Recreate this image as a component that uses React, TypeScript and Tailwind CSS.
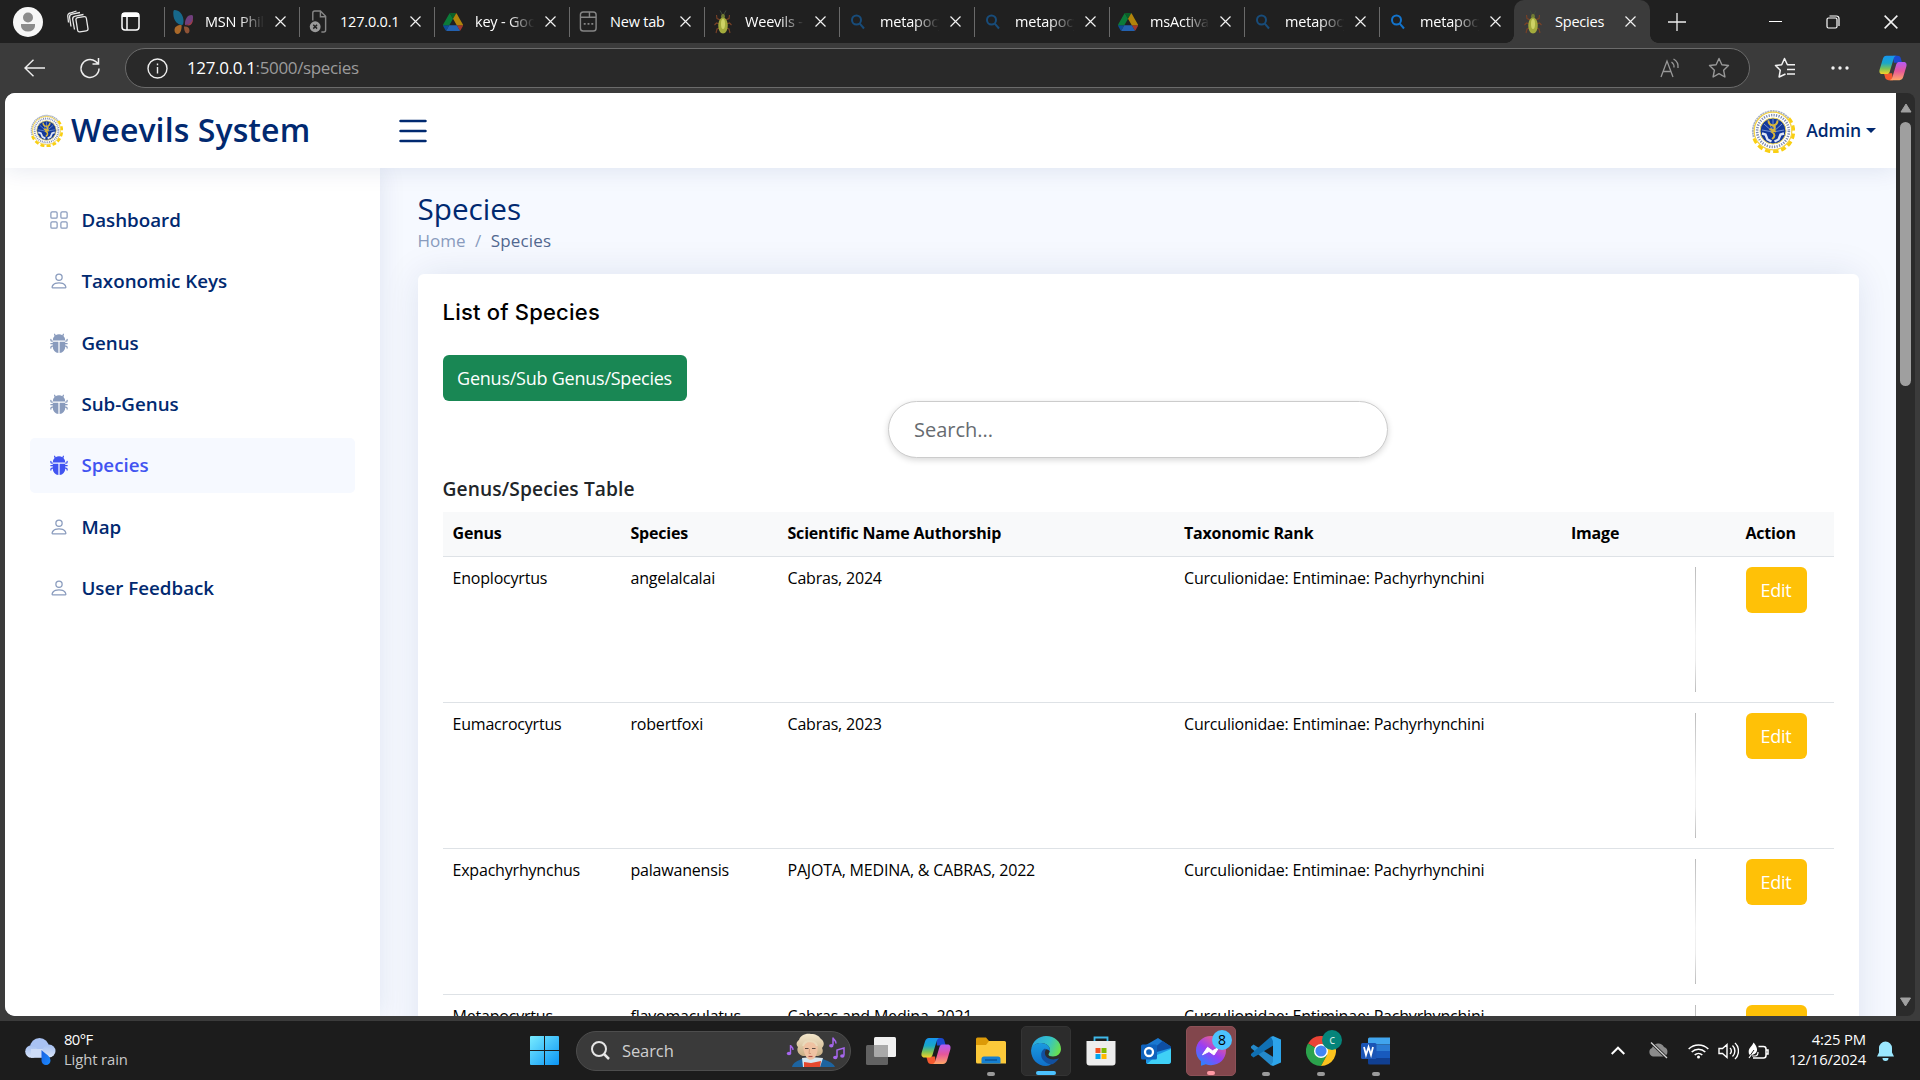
import React from "react";
import { BsGrid, BsPerson, BsBugFill, BsList } from "react-icons/bs";

const DriveIcon = () => (
  <svg width="20" height="18" viewBox="0 0 87 78" className="opacity-65">
    <path fill="#0066da" d="M6.6 66.9l3.9 6.6c.8 1.4 2 2.5 3.3 3.3L27.5 53H0c0 1.6.4 3.1 1.2 4.5z" />
    <path fill="#00ac47" d="M43.7 25L29.9 1.2c-1.3.8-2.5 1.9-3.3 3.3L1.2 48.5C.4 49.9 0 51.5 0 53h27.5z" />
    <path fill="#ea4335" d="M73.6 76.8c1.3-.8 2.5-1.9 3.3-3.3l9.2-16c.8-1.4 1.2-3 1.2-4.5H59.8l5.900 11.5z" />
    <path fill="#00832d" d="M43.7 25L57.4 1.2C56.1.4 54.5 0 52.9 0H34.5c-1.6 0-3.2.5-4.5 1.2z" />
    <path fill="#2684fc" d="M59.8 53H27.5L13.8 76.8c1.3.8 2.9 1.2 4.5 1.2h50.8c1.6 0 3.2-.5 4.5-1.2z" />
    <path fill="#ffba00" d="M73.4 26.5l-12.7-22c-.8-1.4-1.9-2.5-3.3-3.3L43.7 25l16.1 28h27.4c0-1.5-.4-3.1-1.2-4.5z" />
  </svg>
);

const MsnIcon = () => (
  <svg width="20" height="24" viewBox="0 0 20 24" className="opacity-75">
    <path d="M1.500 0C6 0 10 4 10.500 10c.2 3-.5 5-1.500 5C5 15 .5 11 .3 4 .2 1.500.5 0 1.500 0Z" fill="#1480ae" />
    <path d="M18.500 5c1.500 0 1.500 1 1.500 3 0 4-3 7-8 7-.5-5 2-10 6.500-10Z" fill="#8c4a9c" />
    <path d="M12 15c4 0 7.500-3 8-7 .3 4-1.500 7-4 7.500z" fill="#cc4a5a" />
    <path d="M8.500 15C4 15 1.500 17 1.500 20c0 2.500 1.500 4 3 4 3 0 4.500-5 4-9Z" fill="#d9822c" />
    <path d="M11 16.500c3-.5 5.500 1 5.500 4 0 2-1 3-2.300 3-2 0-3.200-3.500-3.200-7Z" fill="#b5653e" />
  </svg>
);

const ErrorPageIcon = () => (
  <svg width="19" height="25" viewBox="0 0 20 26" fill="none" stroke="#858585" strokeWidth="1.500">
    <path d="M4 12V4a2 2 0 0 1 2-2h6l5.500 5.500V22a2 2 0 0 1-2 2H13M12 2v6h5.500" />
    <circle cx="6.500" cy="18.500" r="5.700" fill="#9a9a9a" stroke="none" />
    <path d="M4.500 16.500l4 4m0-4l-4 4" stroke="#222" />
  </svg>
);

const NewTabIcon = () => (
  <svg width="19" height="23" viewBox="0 0 20 24" fill="none" stroke="#858585" strokeWidth="1.500">
    <rect x="1.500" y="2" width="16.500" height="20" rx="3" />
    <path d="M1.500 7.500h16.500M11 2v5.500" />
    <path d="M5 14.500h2m2 0h2m2 0h2" strokeWidth="2" />
  </svg>
);

const WeevilIcon = () => (
  <svg width="18" height="24" viewBox="0 0 18 24">
    <path d="M8 4L6 .5M10 4l2-3.500" stroke="#3f4a3c" fill="none" />
    <path d="M6.500 10L3 8.500 2.500 5M11.500 10L15 8.500l.5-3.500M5.500 14L2.500 13 .5 15M12.500 14l3-1 2 2M6 18l-3 1-1 4M12 18l3 1 1 4" stroke="#7a4227" strokeWidth="1.100" fill="none" />
    <ellipse cx="9" cy="6.500" rx="2" ry="2.700" fill="#6f7a34" />
    <path d="M9 7.500c3 0 4.700 4 4.700 8 0 4.500-2 8-4.700 8s-4.700-3.500-4.700-8c0-4 1.700-8 4.700-8Z" fill="#a3ab3c" />
    <ellipse cx="9" cy="14" rx="2" ry="5" fill="#cdd266" />
  </svg>
);

const BingSearch = ({ bright }: { bright?: boolean }) => (
  <svg width="14" height="16" viewBox="0 0 14 16" fill="none" stroke={bright ? "#1374cc" : "#184c7a"} strokeWidth="2">
    <circle cx="5.500" cy="6" r="4.500" />
    <path d="M8.800 9.700L13 14.500" />
  </svg>
);

const CloseX = ({ size = 11 }: { size?: number }) => (
  <svg width={size} height={size} viewBox="0 0 11 11" stroke="#f2f2f2" strokeWidth="1.200">
    <path d="M.5.5l10 10m0-10l-10 10" />
  </svg>
);

const Copilot = ({ size, id }: { size: number; id: string }) => (
  <svg width={size} height={size} viewBox="0 0 30 30">
    <defs>
      <linearGradient id={id + "a"} x1="0" y1="0" x2="0" y2="1">
        <stop offset="0" stopColor="#1695ee" />
        <stop offset=".4" stopColor="#19a7c8" />
        <stop offset=".7" stopColor="#7ac257" />
        <stop offset="1" stopColor="#f7d12a" />
      </linearGradient>
      <linearGradient id={id + "b"} x1="0" y1="0" x2="0" y2="1">
        <stop offset="0" stopColor="#b45bf5" />
        <stop offset=".5" stopColor="#e5569a" />
        <stop offset="1" stopColor="#ffa667" />
      </linearGradient>
    </defs>
    <path d="M15 2h5c2 0 3 1.200 3.500 3l1.200 4.500H16z" fill="#1b49cf" />
    <path d="M15 28h-5c-2 0-3-1.200-3.500-3l-1.200-4.500H14z" fill="#f4592f" />
    <path d="M8 2h11c-2 0-2.800 1.400-3.400 3.300L11.500 19c-.7 2-1.800 2.500-3.400 2.500H3.500C.6 21.500 0 19 .7 16.500L4 5.500C4.700 3.300 6 2 8 2Z" fill={`url(#${id}a)`} />
    <path d="M22 28H11c2 0 2.800-1.400 3.400-3.300L18.500 11c.7-2 1.800-2.500 3.400-2.500h4.600c2.900 0 3.500 2.500 2.800 5L26 24.500c-.7 2.200-2 3.500-4 3.500Z" fill={`url(#${id}b)`} />
  </svg>
);

const Seal = ({ size }: { size: number }) => (
  <svg width={size} height={size} viewBox="0 0 44 44" className="shrink-0">
    <path d="M37.500 9.500A20 20 0 1 1 3 28" fill="none" stroke="#f9cf12" strokeWidth="4" strokeDasharray="5.200 2.800" />
    <path d="M3 28A20 20 0 0 1 37.500 9.500" fill="none" stroke="#a9b3c8" strokeWidth="2.600" strokeDasharray="2 .6" />
    <circle cx="22" cy="22" r="18.800" fill="#fff" stroke="#f4d246" strokeWidth="1.200" />
    <circle cx="22" cy="22" r="15.900" fill="none" stroke="#7c8ab0" strokeWidth="2.600" strokeDasharray="1.200 1.300" />
    <circle cx="22" cy="22" r="13" fill="#12389b" stroke="#efd75c" strokeWidth="1" />
    <path d="M22 23V10M22 23l-9-8m9 8l9-8M22 23l-11-2m11 2l11-2M22 23l-5-12m5 12l5-12" stroke="#8fa7dc" strokeWidth=".8" />
    <path d="M17.500 11.500c0 3.500 1.500 4.500 4.500 5 3-.5 4.500-1.500 4.500-5M22 16c3 3 2 5-1 7 3.500 2 3 5 0 7M18.500 20l6.500 2.500" stroke="#d9b63a" strokeWidth="2" fill="none" />
    <path d="M11 24.500l3.500 1 2 5 4 2M33 24.500l-3.500 1-2 5-4 2" stroke="#dfe6f5" strokeWidth="2.400" fill="none" />
  </svg>
);

const tabs: { icon: React.ReactNode; title: string; fade: boolean }[] = [
  { icon: <MsnIcon />, title: "MSN Phili", fade: true },
  { icon: <ErrorPageIcon />, title: "127.0.0.1", fade: false },
  { icon: <DriveIcon />, title: "key - Goo", fade: true },
  { icon: <NewTabIcon />, title: "New tab", fade: false },
  { icon: <WeevilIcon />, title: "Weevils -", fade: true },
  { icon: <BingSearch />, title: "metapocy", fade: true },
  { icon: <BingSearch />, title: "metapocy", fade: true },
  { icon: <DriveIcon />, title: "msActivat", fade: true },
  { icon: <BingSearch />, title: "metapocy", fade: true },
  { icon: <BingSearch bright />, title: "metapocy", fade: true },
];

function Tab({ icon, title, fade, active }: { icon: React.ReactNode; title: string; fade: boolean; active?: boolean }) {
  return (
    <div className={active ? "relative flex h-[43px] w-[136px] items-center rounded-t-[10px] bg-[#3b3b3b]" : "flex h-[43px] w-[135px] items-center"}>
      {active && (
        <>
          <div className="absolute -left-2 bottom-0 h-2 w-2 bg-[radial-gradient(circle_at_0_0,transparent_7.5px,#3b3b3b_8px)]" />
          <div className="absolute -right-2 bottom-0 h-2 w-2 bg-[radial-gradient(circle_at_100%_0,transparent_7.5px,#3b3b3b_8px)]" />
        </>
      )}
      <div className={active ? "h-[30px] w-px" : "h-[30px] w-px bg-[#6a6a6a]"} />
      <div className="flex w-[36px] justify-center">{icon}</div>
      <div
        className={
          fade
            ? "ml-1 w-[62px] overflow-hidden whitespace-nowrap text-[14.5px] tracking-[-0.2px] text-white [mask-image:linear-gradient(90deg,#000_55%,transparent_96%)]"
            : "ml-1 w-[62px] whitespace-nowrap text-[14.5px] tracking-[-0.2px] text-white"
        }
      >
        {title}
      </div>
      <div className="ml-[8px]">
        <CloseX />
      </div>
    </div>
  );
}

function Browser() {
  return (
    <>
      <div className="flex h-[43px] items-center bg-[#202020]">
        <div className="flex w-[164px] items-center">
          <svg className="ml-[13px]" width="30" height="30" viewBox="0 0 30 30">
            <circle cx="15" cy="15" r="15" fill="#f7f7f7" />
            <circle cx="15" cy="10.500" r="5" fill="#8c8c8c" />
            <path d="M8 17h14v2a7 5.500 0 0 1-14 0Z" fill="#8c8c8c" />
          </svg>
          <svg className="ml-[24px]" width="22" height="25" viewBox="0 0 22 25" fill="none" stroke="#e8e8e8" strokeWidth="1.300">
            <rect x="9.700" y="8" width="10.500" height="14.500" rx="2" transform="rotate(-9 15 15)" />
            <path d="M7.500 20.500L5.700 10.500a3 3 0 0 1 2.500-3.300L16.500 5.500M4 17.500L2.600 8.500a3 3 0 0 1 2.500-3.300L13 3.500M1.500 13.500L.8 7.500a3 3 0 0 1 2.500-3.500L9.500 2" />
          </svg>
          <svg className="ml-[32px]" width="19" height="19" viewBox="0 0 19 19" fill="none" stroke="#fff" strokeWidth="1.500">
            <rect x="1" y="1" width="17" height="17" rx="3" />
            <path d="M1 3h17" strokeWidth="4" />
            <path d="M6 4v14" />
          </svg>
        </div>
        {tabs.map((t, i) => (
          <Tab key={i} {...t} />
        ))}
        <Tab icon={<WeevilIcon />} title="Species" fade={false} active />
        <svg className="ml-[18px]" width="18" height="18" viewBox="0 0 18 18" stroke="#eee" strokeWidth="1.300">
          <path d="M9 0v18M0 9h18" />
        </svg>
        <div className="ml-auto flex items-center">
          <div className="h-px w-[13px] bg-white" />
          <svg className="ml-[44px]" width="14" height="14" viewBox="0 0 14 14" fill="none" stroke="#fff" strokeWidth="1.200">
            <rect x="1" y="3" width="10" height="10" rx="1.500" />
            <path d="M3.500 1h7a2.500 2.500 0 0 1 2.500 2.500V11" />
          </svg>
          <div className="ml-[44px] mr-[22px]">
            <CloseX size={14} />
          </div>
        </div>
      </div>
      <div className="flex h-[50px] items-center bg-[#3b3b3b]">
        <svg className="ml-[24px]" width="21" height="18" viewBox="0 0 21 18" fill="none" stroke="#eee" strokeWidth="1.400">
          <path d="M21 9H1M9.500.7L1 9l8.500 8.300" />
        </svg>
        <svg className="ml-[34px]" width="22" height="22" viewBox="0 0 22 22" fill="none" stroke="#eee" strokeWidth="1.500">
          <path d="M20 11.500a9 9 0 1 1-3.500-7.200l2.500 2M19.500 1v6h-6" />
        </svg>
        <div className="ml-[24px] flex h-10 w-[1625px] items-center rounded-full border border-[#6b6b6b] bg-[#292929]">
          <svg className="ml-[21px]" width="21" height="21" viewBox="0 0 21 21" fill="none" stroke="#eee" strokeWidth="1.400">
            <circle cx="10.500" cy="10.500" r="9.500" />
            <path d="M10.500 9v6.500M10.500 5.500v1.800" />
          </svg>
          <div className="ml-[19px] text-[17px] tracking-[-0.35px] text-[#9b9b9b]">
            <span className="text-white">127.0.0.1</span>:5000/species
          </div>
          <svg className="ml-auto" width="20" height="20" viewBox="0 0 20 20" fill="none" stroke="#989898" strokeWidth="1.300">
            <path d="M1 19L7 3l6 16M3.200 13.500h7.700M11.500 4a6 6 0 0 1 2.500 5.500M13.500 1a9 9 0 0 1 4.500 9" />
          </svg>
          <svg className="ml-[28px] mr-[19px]" width="22" height="22" viewBox="0 0 22 22" fill="none" stroke="#989898" strokeWidth="1.400" strokeLinejoin="round">
            <path d="M11 1.500l2.900 6.200 6.600.8-4.900 4.700 1.300 6.800L11 16.700 5.100 20l1.300-6.800L1.500 8.500l6.600-.8z" />
          </svg>
        </div>
        <svg className="ml-[24px]" width="22" height="22" viewBox="0 0 22 22" fill="none" stroke="#f2f2f2" strokeWidth="1.500" strokeLinejoin="round">
          <path d="M11.500 17L5.100 20l1.200-6.800L1.500 8.500l6.200-.8L10.500 1.500l2.900 6.200h7.600M13 12.500h8M13 17h8" />
        </svg>
        <svg className="ml-[35px]" width="18" height="4" viewBox="0 0 18 4" fill="#f2f2f2">
          <circle cx="2" cy="2" r="1.700" />
          <circle cx="9" cy="2" r="1.700" />
          <circle cx="16" cy="2" r="1.700" />
        </svg>
        <div className="ml-[30px]">
          <Copilot size={28} id="cpt" />
        </div>
      </div>
    </>
  );
}

const nav = [
  { label: "Dashboard", Icon: BsGrid },
  { label: "Taxonomic Keys", Icon: BsPerson },
  { label: "Genus", Icon: BsBugFill },
  { label: "Sub-Genus", Icon: BsBugFill },
  { label: "Species", Icon: BsBugFill, active: true },
  { label: "Map", Icon: BsPerson },
  { label: "User Feedback", Icon: BsPerson },
];

const rank = "Curculionidae: Entiminae: Pachyrhynchini";
const rows = [
  ["Enoplocyrtus", "angelalcalai", "Cabras, 2024"],
  ["Eumacrocyrtus", "robertfoxi", "Cabras, 2023"],
  ["Expachyrhynchus", "palawanensis", "PAJOTA, MEDINA, & CABRAS, 2022"],
  ["Metapocyrtus", "flavomaculatus", "Cabras and Medina, 2021"],
];

function Site() {
  return (
    <div className="flex h-[923px] w-[1891px] flex-col overflow-hidden rounded-l-[10px] bg-[#f6f9ff]">
      <header className="relative z-20 flex h-[75px] shrink-0 items-center bg-white shadow-[0_2px_25px_rgba(1,41,112,0.1)]">
        <div className="flex w-[350px] items-center pl-[25px]">
          <Seal size={33} />
          <span className="ml-[8px] whitespace-nowrap pb-px text-[32px] font-semibold leading-none tracking-[0.1px] text-[#012970]">Weevils System</span>
        </div>
        <BsList className="ml-[38px] h-10 w-10 text-[#012970]" />
        <div className="ml-auto flex items-center pr-[20px]">
          <Seal size={44} />
          <span className="ml-[11px] text-[17.5px] font-semibold tracking-[-0.1px] text-[#012970]">Admin</span>
          <span className="ml-[5px] h-0 w-0 border-x-[5px] border-t-[5px] border-x-transparent border-t-[#012970]" />
        </div>
      </header>
      <div className="flex min-h-0 flex-1">
        <aside className="relative z-10 w-[375px] shrink-0 bg-white p-[25px] pt-[24.6px] shadow-[0_0_25px_rgba(1,41,112,0.1)]">
          {nav.map(({ label, Icon, active }) => (
            <div
              key={label}
              className={
                active
                  ? "mb-[6.3px] flex h-[55px] items-center rounded-[5px] bg-[#f6f9ff] pl-[19px] text-[18.75px] font-semibold text-[#4154f1]"
                  : "mb-[6.3px] flex h-[55px] items-center rounded-[5px] pl-[19px] text-[18.75px] font-semibold text-[#012970]"
              }
            >
              <Icon className={active ? "mr-[12.4px] h-5 w-5" : "mr-[12.4px] h-5 w-5 text-[#899bbd]"} />
              <span>{label}</span>
            </div>
          ))}
        </aside>
        <main className="min-w-0 flex-1 pl-[37.5px] pr-[37.5px] pt-[24px]">
          <h1 className="text-[29.7px] font-medium leading-[34px] text-[#012970]">Species</h1>
          <div className="mt-[2px] flex h-[26px] items-center text-[17px] text-[#899bbd]">
            <span>Home</span>
            <span className="mx-[9.5px]">/</span>
            <span className="tracking-[0.15px] text-[#51678f]">Species</span>
          </div>
          <section className="mt-[20px] h-[900px] rounded-[6px] bg-white px-[25px] pt-[25px] shadow-[0_0_37px_rgba(1,41,112,0.1)]">
            <h2 className="h-[27px] font-['Inter'] text-[22px] font-medium leading-[27px] tracking-[0.2px] text-black">List of Species</h2>
            <button className="mt-[29px] flex h-[46px] w-[244px] items-center justify-center whitespace-nowrap rounded-[6px] bg-[#198754] text-[18px] tracking-[-0.24px] text-white">
              Genus/Sub Genus/Species
            </button>
            <div className="mx-auto flex h-[57px] w-[500px] items-center rounded-full border border-[#ccc] bg-white px-[25px] text-[20px] text-[#666b70] shadow-[0_2px_6px_rgba(0,0,0,0.16)]">
              Search...
            </div>
            <h3 className="mt-[19px] h-[24px] text-[19.2px] font-semibold leading-[24px] tracking-[0.1px] text-[#212529]">Genus/Species Table</h3>
            <table className="mt-[11px] w-[1391px] table-fixed border-collapse text-left text-[16px] leading-6 text-black">
              <colgroup>
                <col className="w-[178px]" />
                <col className="w-[157px]" />
                <col className="w-[396.5px]" />
                <col className="w-[387px]" />
                <col className="w-[174.5px]" />
                <col className="w-[98px]" />
              </colgroup>
              <thead>
                <tr className="h-[44px] border-b border-[#dee2e6] bg-[#f8f9fa]">
                  {["Genus", "Species", "Scientific Name Authorship", "Taxonomic Rank", "Image", "Action"].map((h) => (
                    <th key={h} className="whitespace-nowrap px-[10px] pb-px pt-0 font-bold tracking-[-0.2px]">
                      {h}
                    </th>
                  ))}
                </tr>
              </thead>
              <tbody>
                {rows.map((r) => (
                  <tr key={r[0]} className="h-[146px] border-b border-[#dee2e6] align-top">
                    {[...r, rank].map((c) => (
                      <td key={c} className="whitespace-nowrap px-[10px] pt-[9px] tracking-[-0.2px]">
                        {c}
                      </td>
                    ))}
                    <td className="px-[10px] pt-[10px]">
                      <div className="ml-[124px] h-[125px] w-px bg-[linear-gradient(#bcbcbc,#f2f2f2_55%,#ececec_75%,#bcbcbc)]" />
                    </td>
                    <td className="px-[10px] pt-[10px]">
                      <button className="flex h-[46px] w-[61px] items-center justify-center rounded-[6px] bg-[#ffc107] text-[18px] tracking-[-0.2px] text-white">Edit</button>
                    </td>
                  </tr>
                ))}
              </tbody>
            </table>
          </section>
        </main>
      </div>
    </div>
  );
}

const StoreIcon = () => (
  <svg width="30" height="30" viewBox="0 0 30 30">
    <path d="M8.500 7V1.500h13V7" fill="none" stroke="#3fb8e8" strokeWidth="1.800" />
    <path d="M.5 5h29v21.500a3 3 0 0 1-3 3h-23a3 3 0 0 1-3-3z" fill="#ededed" />
    <path fill="#f25022" d="M9.500 12h5v5h-5z" />
    <path fill="#7fba00" d="M15.500 12h5v5h-5z" />
    <path fill="#00a4ef" d="M9.500 18h5v5h-5z" />
    <path fill="#ffb900" d="M15.500 18h5v5h-5z" />
  </svg>
);

const EdgeIcon = () => (
  <svg width="30" height="30" viewBox="0 0 30 30">
    <defs>
      <linearGradient id="edg" x1="0" x2="1" y1=".3" y2=".6">
        <stop offset="0" stopColor="#2aa5e0" />
        <stop offset=".55" stopColor="#35c3c8" />
        <stop offset="1" stopColor="#6be04a" />
      </linearGradient>
      <linearGradient id="edb" x1="0" x2="0" y1="0" y2="1">
        <stop offset="0" stopColor="#1a9be0" />
        <stop offset="1" stopColor="#0f6fca" />
      </linearGradient>
    </defs>
    <path d="M.3 13C1.500 5 8 0 15 0c9 0 15 6 15 13 0 4.500-3.500 7.500-8 7.500-3 0-4.500-1-4.500-2s1.500-2 1.500-4.500c0-4-4-7-9-7-4 0-8 2-9.700 6Z" fill="url(#edg)" />
    <path d="M.1 14C1 9 5 7 10 7c5 0 9 3 9 7 0 .6-.1 1-.2 1.500C17 12 11 12.500 11 18c0 6 5 9.500 10 9.500-2 1.700-4 2.500-6 2.500C6 30-.4 22 .1 14Z" fill="url(#edb)" />
    <path d="M13 13c-3 2-4 7-1 11 3 3.500 7 4.800 10 3.900 3-1.600 5-3.900 6-5.900-6 3-13 1-14-4-.3-2 .2-3.300 1.200-4.800-.8-.4-1.500-.5-2.200-.2Z" fill="#12509f" />
  </svg>
);

const OutlookIcon = () => (
  <svg width="30" height="28" viewBox="0 0 30 28">
    <path d="M5 8L17 1l12 8v5H5z" fill="#1a78d0" />
    <path d="M12 12l9.500-8L30 9.500v2L14 20z" fill="#0e4fa4" />
    <path d="M5 26V18l25-7v13a3 3 0 0 1-3 3H6z" fill="#1c93e4" />
    <path d="M30 12v12a3 3 0 0 1-3 3H6L16 18z" fill="#3fd0f6" />
    <rect y="7.500" width="16" height="15" rx="1.500" fill="#0f62bd" />
    <circle cx="8" cy="15" r="4" fill="none" stroke="#fff" strokeWidth="2.300" />
  </svg>
);

const FolderIcon = () => (
  <svg width="30" height="27" viewBox="0 0 30 27">
    <path d="M0 2a1.500 1.500 0 0 1 1.500-1.500H10L13 4h15v6H0z" fill="#dc9a08" />
    <path d="M0 8h10l3-4h15.500A1.500 1.500 0 0 1 30 5.500V26.500H1.500A1.500 1.500 0 0 1 0 25z" fill="#fcc93a" />
    <path d="M5.500 26.500v-4.500a2.500 2.500 0 0 1 2.500-2.500h14a2.500 2.500 0 0 1 2.500 2.500v4.500z" fill="#1580d2" />
    <path d="M9 23h12" stroke="#0b5698" strokeWidth="1.500" />
  </svg>
);

const MessengerIcon = () => (
  <svg width="30" height="30" viewBox="0 0 30 30">
    <defs>
      <linearGradient id="msg" x1=".1" y1="1" x2=".8" y2="0">
        <stop offset="0" stopColor="#188fff" />
        <stop offset=".5" stopColor="#9a3df5" />
        <stop offset="1" stopColor="#ff6870" />
      </linearGradient>
    </defs>
    <path d="M15 0C6.500 0 0 6.200 0 14.600c0 4.300 1.800 8 5 10.600v4.600l4.800-1.500c1.600.6 3.400.9 5.200.9 8.500 0 15-6.200 15-14.600S23.500 0 15 0Z" fill="url(#msg)" />
    <path d="M6.500 18.800l5-7.500 5 3.500 6.500-3.500-5 7.700-5-3.500z" fill="#fff" stroke="#fff" strokeLinejoin="round" />
  </svg>
);

const CodeIcon = () => (
  <svg width="30" height="30" viewBox="0 0 30 30">
    <path d="M2.500 8.500L0 10.500v1.500l20 17.500 3-1.500v-6.500z" fill="#2489ca" />
    <path d="M2.500 21.500L0 19.500V18L20 .5l3 1.500v7z" fill="#1070b3" />
    <path d="M22 0l8 3.500v23L22 30l-2-1 2-3V5l-2-4z" fill="#2da4ea" />
  </svg>
);

const ChromeIcon = () => (
  <svg width="30" height="30" viewBox="0 0 30 30">
    <path d="M15 15L2 7.500A15 15 0 0 1 28 7.500z" fill="#ea4335" />
    <path d="M15 15L2 7.500A15 15 0 0 0 15 30l6-11z" fill="#2ba24c" />
    <path d="M15 8h13.300A15 15 0 0 1 15 30l6-11z" fill="#fcc31e" />
    <circle cx="15" cy="15" r="7" fill="#fff" />
    <circle cx="15" cy="15" r="5.600" fill="#4285f4" />
  </svg>
);

const WordIcon = () => (
  <svg width="30" height="28" viewBox="0 0 30 28">
    <path fill="#41a5ee" d="M7 2A1.500 1.500 0 0 1 8.500.5H29V7.500H7z" />
    <path fill="#2b7cd3" d="M7 7.500h22V14H7z" />
    <path fill="#185abd" d="M7 14h22v7H7z" />
    <path fill="#103f91" d="M7 21h22v6.500H8.500A1.500 1.500 0 0 1 7 26z" />
    <rect y="6" width="15.500" height="16" rx="1.500" fill="#1a55b5" />
    <path d="M3 10l2 8 2.500-8 2.500 8 2-8" fill="none" stroke="#fff" strokeWidth="1.800" />
  </svg>
);

const Composer = () => (
  <svg width="59" height="35" viewBox="0 0 59 35">
    <defs>
      <linearGradient id="hair" x1="0" x2="0" y1="0" y2="1">
        <stop offset="0" stopColor="#f3e6cb" />
        <stop offset="1" stopColor="#c9ae84" />
      </linearGradient>
    </defs>
    <path d="M6 34c1-5 6-6 12-9h16c7 3 13 4 15 9z" fill="#1d64a0" />
    <path d="M17 34l-1-9 9-1 12 1-3 9z" fill="#d6e6ef" />
    <path d="M18 34l0-5 7 1 10-2-1 6z" fill="#e5492f" />
    <path d="M25 1c-6-1-11 2-12 6-3 2-3 5-1 7-2 4 1 8 5 9h15c4-1 6-4 4-8 3-3 2-7-1-9-2-3-5-5-10-5Z" fill="url(#hair)" />
    <path d="M17.500 11c2-4 11-4 13.500 0 1.500 4 .5 9-1.500 12.500-2 3.500-6 4.500-8.500 1.500-2.500-3-4.500-10-3.500-14Z" fill="#efc2a2" />
    <path d="M17 13c1-4 3-4 5-5 3 1 7-1 9 5" stroke="#e9d9ba" strokeWidth="2" fill="none" />
    <path d="M19 15.500h3.500m3.500 0h3.500" stroke="#5d4a42" strokeWidth="1.200" />
    <path d="M23.500 16l-.5 4.500h2" stroke="#cf9676" strokeWidth=".9" fill="none" />
    <path d="M22.500 23.500h4" stroke="#b4524a" strokeWidth="1.200" />
    <path d="M4.500 20v-8c0 2 3 2 2.500 5" stroke="#a767ee" strokeWidth="1.400" fill="none" />
    <ellipse cx="3" cy="20.500" rx="2.200" ry="1.800" fill="#a767ee" />
    <path d="M47 12V4.500c0 2.500 3.500 2.500 3 6M51 24v-7l7-2v7.500" stroke="#a767ee" strokeWidth="1.500" fill="none" />
    <ellipse cx="45.300" cy="12.700" rx="2.200" ry="1.800" fill="#a767ee" />
    <ellipse cx="49.300" cy="24.500" rx="2.200" ry="1.800" fill="#a767ee" />
    <ellipse cx="56.300" cy="23" rx="2.200" ry="1.800" fill="#a767ee" />
  </svg>
);

const apps: { icon: React.ReactNode; tile?: string; bar?: string; badge?: React.ReactNode }[] = [
  {
    icon: (
      <svg width="30" height="28" viewBox="0 0 30 28">
        <rect x="8" y="0" width="22" height="20" rx="1.500" fill="#f1f1f1" />
        <rect x="0" y="8" width="22" height="20" rx="1.500" fill="#6e6e6e" fillOpacity=".85" />
        <path d="M8 8h14v12H9.500A1.500 1.500 0 0 1 8 18.500z" fill="#a9a9a9" />
      </svg>
    ),
  },
  { icon: <Copilot size={30} id="cpb" /> },
  { icon: <FolderIcon />, bar: "w-2 bg-[#9a9a9a]" },
  { icon: <EdgeIcon />, tile: "bg-[#2c2c2c] border border-[#343434]", bar: "w-5 bg-[#4cc2ff]" },
  { icon: <StoreIcon /> },
  { icon: <OutlookIcon /> },
  {
    icon: <MessengerIcon />,
    tile: "bg-[#82464c] border border-[#8c5157]",
    bar: "w-2 bg-[#ff99a4]",
    badge: <div className="absolute right-[3px] top-[3px] flex h-5 w-5 items-center justify-center rounded-full bg-[#4cc2ff] text-[14px] leading-none text-black">8</div>,
  },
  { icon: <CodeIcon />, bar: "w-2 bg-[#9a9a9a]" },
  {
    icon: <ChromeIcon />,
    bar: "w-2 bg-[#9a9a9a]",
    badge: <div className="absolute right-[4px] top-[4px] flex h-5 w-5 items-center justify-center rounded-full bg-[#05847a] text-[12px] leading-none text-[#d4ece9]">c</div>,
  },
  { icon: <WordIcon />, bar: "w-2 bg-[#9a9a9a]" },
];

function Taskbar() {
  return (
    <div className="flex h-[59px] items-center bg-[#1c1c1c] text-[14.8px] leading-5 text-white">
      <div className="flex w-[530px] items-center pl-[25px]">
        <svg width="31" height="28" viewBox="0 0 31 28">
          <defs>
            <linearGradient id="cl" x1="0" x2="0" y1="0" y2="1">
              <stop offset="0" stopColor="#a4bff2" />
              <stop offset="1" stopColor="#d8e4f8" />
            </linearGradient>
            <linearGradient id="drop" x1="0" x2="1" y1="0" y2="1">
              <stop offset="0" stopColor="#1a5fe0" />
              <stop offset="1" stopColor="#1a8bff" />
            </linearGradient>
          </defs>
          <circle cx="14.500" cy="10.500" r="9.500" fill="#a9c2f3" />
          <circle cx="6.500" cy="14.500" r="6.300" fill="url(#cl)" />
          <path d="M6 12h18v8.800H6z" fill="#cddcf7" />
          <circle cx="24" cy="14" r="6.500" fill="url(#cl)" />
          <path d="M16.500 13c4 4 9 6 9 10.500a4.500 4.500 0 0 1-9 0z" fill="url(#drop)" />
        </svg>
        <div className="ml-[8px] pb-[4px]">
          <div className="tracking-[-0.6px]">80°F</div>
          <div className="tracking-[-0.1px] text-[#c8c8c8]">Light rain</div>
        </div>
      </div>
      <svg width="29" height="29" viewBox="0 0 29 29">
        <defs>
          <linearGradient id="win" x1="0" x2="1" y1="0" y2="1">
            <stop offset="0" stopColor="#78ecff" />
            <stop offset="1" stopColor="#0b95f5" />
          </linearGradient>
        </defs>
        <path d="M1 0h13v14H0V1a1 1 0 0 1 1-1zM15 0h13a1 1 0 0 1 1 1v13H15zM0 15h14v14H1a1 1 0 0 1-1-1zM15 15h14v13a1 1 0 0 1-1 1H15z" fill="url(#win)" />
      </svg>
      <div className="ml-[17px] flex h-10 w-[275px] items-center rounded-full border border-[#4d4d4d] bg-[#3a3a3a]">
        <svg className="ml-[14px]" width="19" height="19" viewBox="0 0 19 19" fill="none" stroke="#e6e6e6" strokeWidth="2">
          <circle cx="8" cy="8" r="7" />
          <path d="M13 13l5 5" strokeWidth="2.500" />
        </svg>
        <span className="ml-[12px] text-[16.5px] tracking-[-0.1px] text-[#cfcfcf]">Search</span>
        <div className="ml-auto mr-[5px]">
          <Composer />
        </div>
      </div>
      <div className="ml-[5px] flex gap-[5px]">
        {apps.map((a, i) => (
          <div key={i} className={"relative flex h-[50px] w-[50px] items-center justify-center rounded-[5px] " + (a.tile ?? "")}>
            {a.icon}
            {a.badge}
            {a.bar && <div className={"absolute bottom-0 left-1/2 h-1 -translate-x-1/2 rounded-full " + a.bar} />}
          </div>
        ))}
      </div>
      <div className="ml-auto flex items-center">
        <svg width="14" height="9" viewBox="0 0 14 9" fill="none" stroke="#fff" strokeWidth="2">
          <path d="M.7 8L7 1.700 13.300 8" />
        </svg>
        <svg className="ml-[23px]" width="21" height="17" viewBox="0 0 21 17">
          <path d="M5 14.500A4.500 4.500 0 0 1 4 6a6.500 6.500 0 0 1 12-1 5 5 0 0 1 0 9.500z" fill="#8c8c8c" />
          <path d="M3 .5L19 16" stroke="#1c1c1c" strokeWidth="3" />
          <path d="M3 .5L19 16" stroke="#d5d5d5" strokeWidth="1.300" />
        </svg>
        <svg className="ml-[19px]" width="21" height="16" viewBox="0 0 21 16" fill="none" stroke="#fff" strokeWidth="1.600">
          <path d="M.7 6a14 14 0 0 1 19.600 0M3.700 9a9.800 9.800 0 0 1 13.600 0M6.700 12a5.500 5.500 0 0 1 7.600 0" />
          <circle cx="10.500" cy="14" r="1.500" fill="#fff" stroke="none" />
        </svg>
        <svg className="ml-[9px]" width="21" height="18" viewBox="0 0 21 18" fill="none" stroke="#fff" strokeWidth="1.400">
          <path d="M1 6.500h3.500L9 2.500v13l-4.500-4H1zM12 6a4 4 0 0 1 0 6M14.500 3.500a7.500 7.500 0 0 1 0 11M17 1a11 11 0 0 1 0 16" />
        </svg>
        <svg className="ml-[9px]" width="21" height="18" viewBox="0 0 21 18" fill="none" stroke="#fff" strokeWidth="1.500">
          <path d="M10.500 4.500h5A2.500 2.500 0 0 1 18 7v6.500a2.500 2.500 0 0 1-2.500 2.500H5M18.500 8h1.500v4h-1.500" />
          <path d="M1 12C-.5 6 4 5 5.500.5 7 2 8.500 4 9 7c.5 4-3 6-7 6z" fill="#fff" stroke="none" />
          <path d="M1 16l5-7M4 14h3c2 0 3-2 3-4" stroke="#fff" strokeWidth="1.200" />
          <path d="M2.500 13l3.500-5" stroke="#1c1c1c" strokeWidth="1" />
        </svg>
        <div className="w-[97px] pb-[4px] text-right tracking-[-0.15px]">
          <div>4:25 PM</div>
          <div>12/16/2024</div>
        </div>
        <svg className="ml-[11px] mr-[26px]" width="17" height="20" viewBox="0 0 17 20" fill="#9be8ff">
          <path d="M8.500.5A6.500 6.500 0 0 1 15 7v4.500l2 4H0l2-4V7A6.500 6.500 0 0 1 8.500.5ZM5.500 17h6a3 3 0 0 1-6 0Z" />
        </svg>
      </div>
    </div>
  );
}

export default function App() {
  return (
    <div className="h-[1080px] w-[1920px] overflow-hidden bg-[#3b3b3b] font-['Open_Sans','Noto_Sans',sans-serif]">
      <Browser />
      <div className="mb-[5px] flex pl-[5px]">
        <Site />
        <div className="flex h-[923px] w-[19px] flex-col items-center rounded-r-[8px] bg-[#2b2b2b] pb-[9px] pt-[10px]">
          <svg width="12" height="10" viewBox="0 0 12 10" fill="#a0a0a0" stroke="#a0a0a0" strokeLinejoin="round">
            <path d="M6 1l5 8H1z" />
          </svg>
          <div className="mt-[9px] h-[264px] w-[11px] rounded-full bg-[#9f9f9f]" />
          <svg className="mt-auto" width="13" height="10" viewBox="0 0 12 10" fill="#a0a0a0" stroke="#a0a0a0" strokeLinejoin="round">
            <path d="M6 9l5-8H1z" />
          </svg>
        </div>
      </div>
      <Taskbar />
    </div>
  );
}
